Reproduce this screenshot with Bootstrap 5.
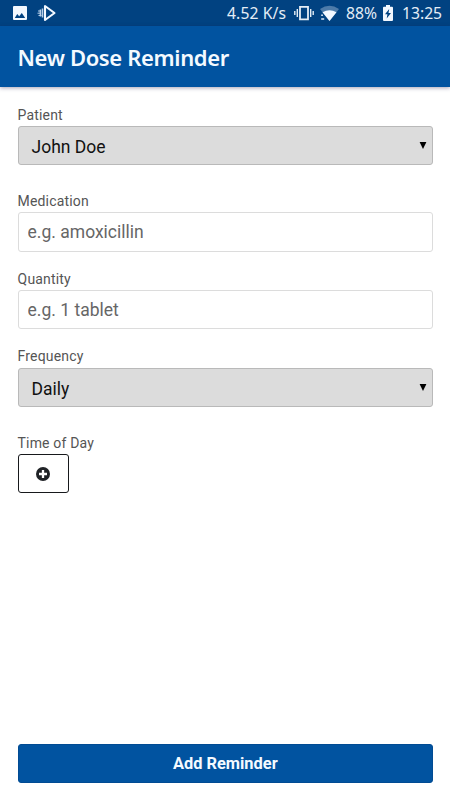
<!DOCTYPE html>
<html lang="en">
<head>
<meta charset="utf-8">
<meta name="viewport" content="width=device-width, initial-scale=1">
<title>New Dose Reminder</title>
<link rel="stylesheet" href="https://cdn.jsdelivr.net/npm/bootstrap@5.3.0/dist/css/bootstrap.min.css">
<style>
body { font-family: Roboto, sans-serif; height: 800px; overflow: hidden; }
.status-bar { height: 26px; background: #014281; color: #e4edf6; font: 15.7px/27px "Noto Sans", sans-serif; flex: none; }
.status-bar svg { display: block; flex: none; }
.status-bar span { white-space: nowrap; }
.status-items { padding-right: 6px; }
.speed { width: 61px; margin-right: 7px; letter-spacing: .1px; }
.vibrate { margin-left: -1px; }
.wifi { margin-left: 6px; }
.battery-level { width: 32px; margin: 0 5px 0 7px; }
.clock { width: 42px; margin-left: 9px; }
.cast { margin-left: 9px; }
.app-bar { height: 61px; background: #0153a0; box-shadow: 0 1px 4px rgba(35,25,75,.4); flex: none; padding: 0 17.500px; }
.app-bar h1 { font: 600 22px/30px "Noto Sans", sans-serif; letter-spacing: -.36px; color: #f4faff; white-space: nowrap; }
.form-area { padding: 16px 17px 0 17.6px; }
.field-label { font-size: 14px; line-height: 22.5px; padding-top: .5px; letter-spacing: .16px; color: #555; display: block; }
.field-box { height: 39.3px; font-size: 17.5px; line-height: 26px; border-radius: 3px; }
.form-control.field-box { padding: 6px 9px; border-color: #dcdcdc; }
.form-control.field-box::placeholder { color: #666; opacity: 1; }
.select-box { background: #dcdcdc; border: 1px solid #b9b9b9; color: #111; padding: 3px 5px 0 13px; }
.gap-wide { margin-bottom: 24.2px; }
.gap-narrow { margin-bottom: 15.3px; }
.add-time { width: 51.5px; border: 1px solid #17191c; background: #fff; }
.footer-area { padding: 0 17px 17px 17.6px; }
.submit-button { background: #0153a0; border: 1px solid #014b93; color: #f4faff; font-size: 16.4px; font-weight: 700; padding: 1px 0 0; }
</style>
<script src="https://cdn.jsdelivr.net/npm/bootstrap@5.3.0/dist/js/bootstrap.bundle.min.js"></script>
</head>
<body class="d-flex flex-column bg-white">
<div class="status-bar d-flex align-items-center justify-content-between">
  <div class="d-flex align-items-center ms-2 ps-1">
    <svg width="16" height="26" viewBox="0 0 16 26"><path fill="#f2f8ff" fill-rule="evenodd" d="M2 6h12q1 0 1 1v12q0 1-1 1H2q-1 0-1-1V7q0-1 1-1zm.8 12h10.4L9.800 13 7.200 16.200 5.200 14z"/></svg>
    <svg class="cast" width="20" height="26" viewBox="0 0 20 26"><path d="M8 6v14l9.500-7z" fill="none" stroke="#f2f8ff" stroke-width="2.100" stroke-linejoin="round"/><path d="M5.500 8.500v9M3.400 9.500v7" stroke="#b7cfe8" stroke-width="1.500"/><path d="M1 11h3M.5 13.200h3M1.500 15.500h3" stroke="#b7cfe8" stroke-width="1"/></svg>
  </div>
  <div class="status-items d-flex align-items-center">
    <span class="speed">4.52 K/s</span>
    <svg class="vibrate" width="20" height="26" viewBox="0 0 20 26"><path d="M6 6.800h8v12.500H6z" fill="none" stroke="#e4edf6" stroke-width="1.800"/><path d="M3.300 9v8M16.700 9v8M.8 11v4M19.200 11v4" stroke="#e4edf6" stroke-width="1.400"/></svg>
    <svg class="wifi" width="19" height="26" viewBox="0 0 19 26"><path fill="#4d7ba9" d="M0 9Q9.500 2.500 19 9l-9.500 12z"/><path fill="#f2f8ff" d="M2.500 12.300Q9.500 8 16.500 12.300L9.500 21z"/><path d="M1.200 15.200h1.700M1.200 19h3" stroke="#dce9f6" stroke-width="1.400"/></svg>
    <span class="battery-level">88%</span>
    <svg width="10" height="26" viewBox="0 0 10 26"><path fill="#f2f8ff" d="M3 5h4v1.700h2q1 0 1 1V20q0 1-1 1H1q-1 0-1-1V7.700q0-1 1-1h2z"/><path fill="#014281" d="M6.200 9 2 14.300h2.400L3.700 18.500 8 13H5.500z"/></svg>
    <span class="clock">13:25</span>
  </div>
</div>
<header class="app-bar d-flex align-items-center"><h1 class="m-0">New Dose Reminder</h1></header>
<main class="form-area d-flex flex-column flex-grow-1">
  <div class="gap-wide">
    <label class="field-label">Patient</label>
    <div class="field-box select-box d-flex align-items-center justify-content-between"><span>John Doe</span>
      <svg width="8" height="12" viewBox="0 0 8 12"><path d="M.6 1h6.800L4 8z"/></svg></div>
  </div>
  <div class="gap-narrow">
    <label class="field-label" for="medication">Medication</label>
    <input id="medication" class="form-control field-box" placeholder="e.g. amoxicillin">
  </div>
  <div class="gap-narrow">
    <label class="field-label" for="quantity">Quantity</label>
    <input id="quantity" class="form-control field-box" placeholder="e.g. 1 tablet">
  </div>
  <div class="gap-wide">
    <label class="field-label">Frequency</label>
    <div class="field-box select-box d-flex align-items-center justify-content-between"><span>Daily</span>
      <svg width="8" height="12" viewBox="0 0 8 12"><path d="M.6 1h6.800L4 8z"/></svg></div>
  </div>
  <div>
    <span class="field-label">Time of Day</span>
    <button class="btn add-time field-box p-0 d-flex align-items-center justify-content-center" aria-label="Add time">
      <svg width="14" height="14" viewBox="0 0 14 14"><circle cx="7" cy="7" r="7" fill="#202327"/><path d="M7 3v8M3 7h8" stroke="#fff" stroke-width="2.300"/></svg>
    </button>
  </div>
</main>
<footer class="footer-area"><button class="btn submit-button field-box w-100 d-block">Add Reminder</button></footer>
</body>
</html>
